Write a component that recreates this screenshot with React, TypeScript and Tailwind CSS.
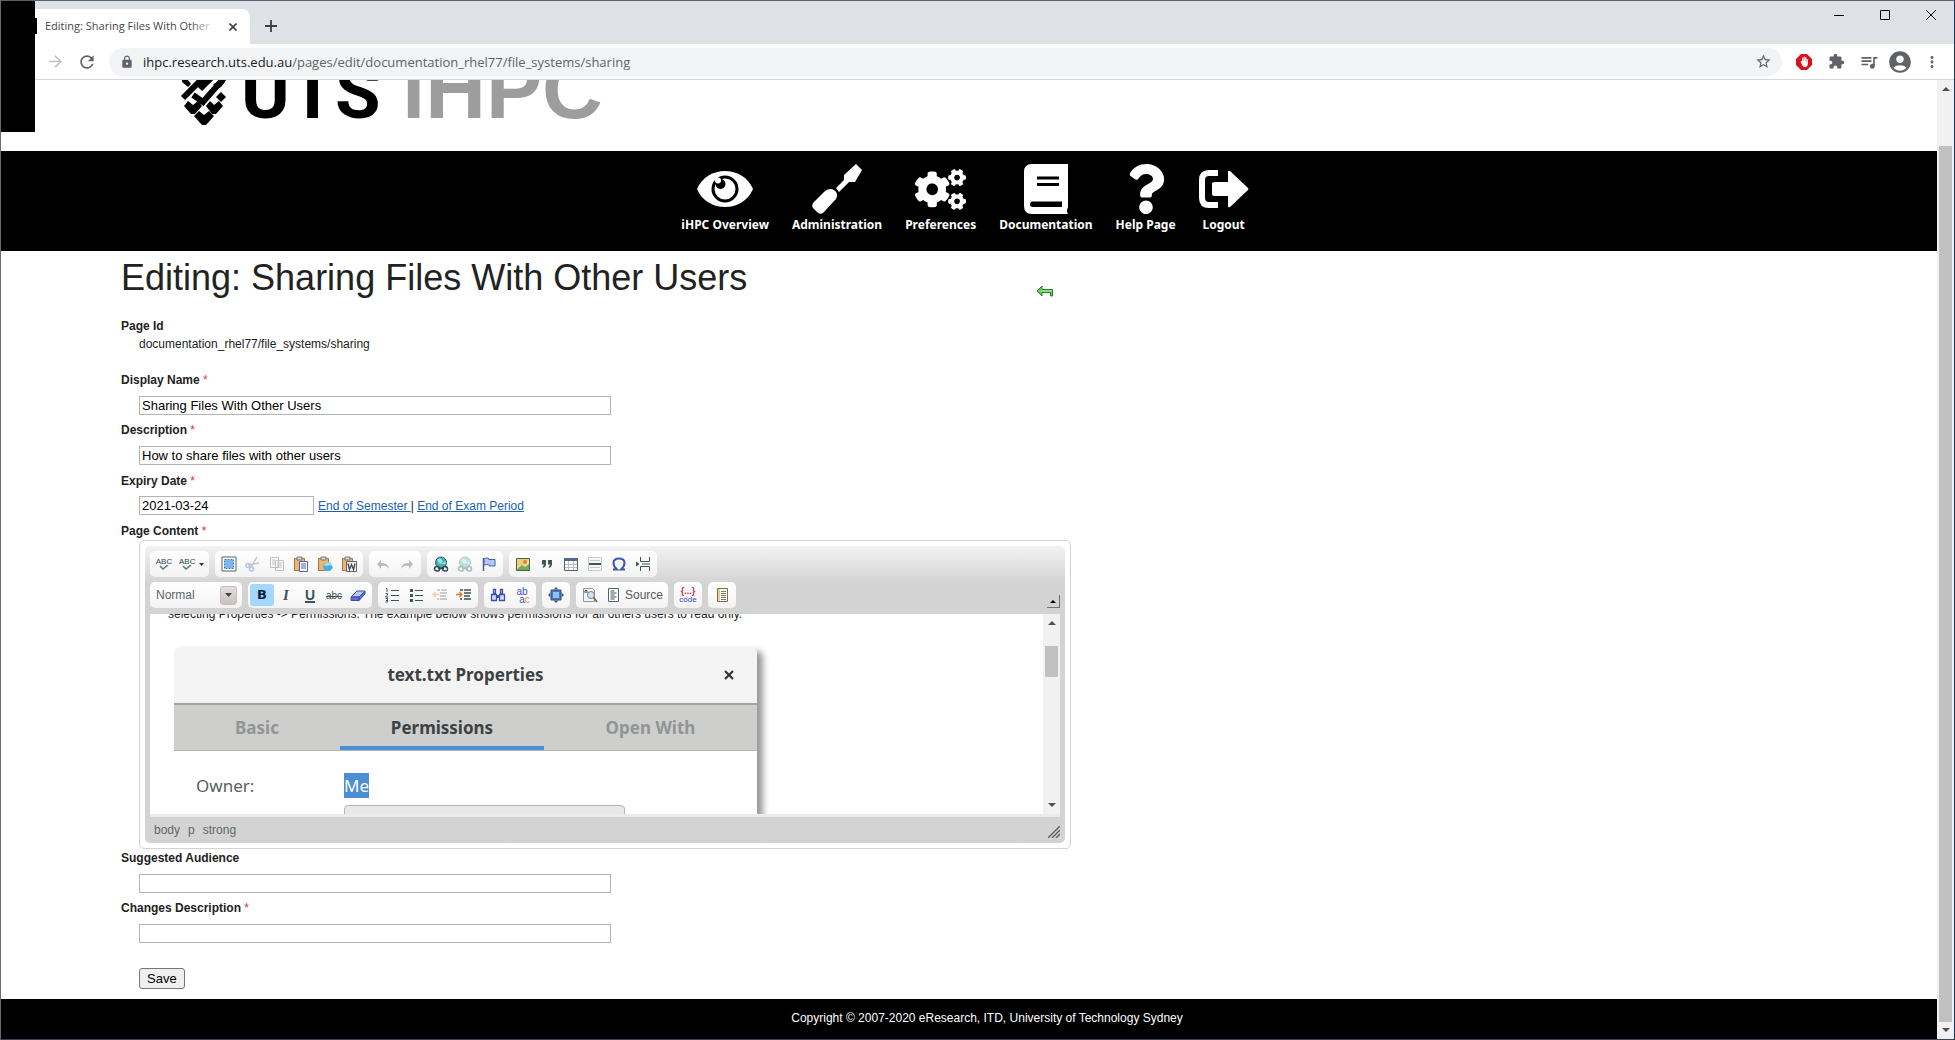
import type { ReactNode } from "react";
import { FaCogs, FaQuestion } from "react-icons/fa";
import {
  MdAccountCircle,
  MdArrowForward,
  MdExtension,
  MdLock,
  MdMoreVert,
  MdQueueMusic,
  MdRefresh,
  MdStarBorder,
} from "react-icons/md";

/* ---------- browser window ---------- */

function WindowBar() {
  return (
    <div className="flex h-[43px] items-start bg-[#dee1e6] pl-[28px]">
      <div className="mt-[8px] flex h-[35px] w-[221px] items-center rounded-t-lg bg-white pr-[9px] pl-[16px]">
        <span className="relative flex-1 overflow-hidden font-['Open_Sans',sans-serif] text-[11px] whitespace-nowrap text-[#45484c]">
          Editing: Sharing Files With Other
          <span className="absolute inset-y-0 right-0 w-[24px] bg-linear-to-r from-transparent to-white" />
        </span>
        <button aria-label="Close tab" className="ml-[10px] flex size-[16px] items-center justify-center">
          <svg viewBox="0 0 8 8" className="size-[8px]" stroke="#3c4043" strokeWidth="1.6">
            <path d="M0.5 0.5l7 7M7.5 0.5l-7 7" />
          </svg>
        </button>
      </div>
      <button aria-label="New tab" className="mt-[15px] ml-[11px] flex size-[20px] items-center justify-center">
        <svg viewBox="0 0 12 12" className="size-[12px]" stroke="#3c4043" strokeWidth="1.8">
          <path d="M6 0v12M0 6h12" />
        </svg>
      </button>
      <div className="ml-auto flex h-[28px]">
        <button aria-label="Minimize" className="flex w-[46px] items-center justify-center">
          <svg viewBox="0 0 10 10" className="size-[10px]" stroke="#000" fill="none"><path d="M0 5.5h10" /></svg>
        </button>
        <button aria-label="Maximize" className="flex w-[46px] items-center justify-center">
          <svg viewBox="0 0 10 10" className="size-[10px]" stroke="#000" fill="none"><path d="M.5.5h9v9h-9z" /></svg>
        </button>
        <button aria-label="Close" className="flex w-[46px] items-center justify-center">
          <svg viewBox="0 0 10 10" className="size-[10px]" stroke="#000" fill="none"><path d="M0 0l10 10M10 0L0 10" /></svg>
        </button>
      </div>
    </div>
  );
}

function AddressBar() {
  return (
    <div className="flex h-[36px] items-center border-b border-[#d5d7da] bg-white pr-[13px] pl-[45px] text-[#5f6368]">
      <button aria-label="Forward" className="w-[20px]"><MdArrowForward size={19} className="text-[#bdbfc2]" /></button>
      <button aria-label="Reload" className="ml-[11px] w-[20px]"><MdRefresh size={20} /></button>
      <div className="ml-[12px] flex h-[28px] flex-1 items-center rounded-full bg-[#f1f3f4] pr-[10px] pl-[11px]">
        <MdLock size={14} />
        <p className="ml-[9px] flex font-['Open_Sans',sans-serif] text-[13px] leading-[18px] whitespace-nowrap">
          <span className="text-[#202124]">ihpc.research.uts.edu.au</span>
          <span>/pages/edit/documentation_rhel77/file_systems/sharing</span>
        </p>
        <button aria-label="Bookmark this page" className="ml-auto"><MdStarBorder size={17} /></button>
      </div>
      <div className="ml-[14px] flex items-center">
        <button aria-label="Ad blocker" className="flex w-[16px] justify-center">
          <svg viewBox="0 0 16 16" className="size-[16px]">
            <path d="M5 0h6l5 5v6l-5 5H5l-5-5V5z" fill="#d9101e" />
            <path d="M4.500 7.500q.8-1 1.500.5V4q.6-.8 1.200 0v3h.4V3q.6-.8 1.200 0v4h.4V3.500q.6-.8 1.200 0V8h.3V5.500q.6-.8 1.200 0V10q-.4 3-2.900 3.200-2 0-3-2.500z" fill="#fff" />
          </svg>
        </button>
        <button aria-label="Extensions" className="ml-[16px]"><MdExtension size={17} /></button>
        <button aria-label="Media" className="ml-[14px]"><MdQueueMusic size={20} /></button>
        <button aria-label="Profile" className="ml-[8px]"><MdAccountCircle size={26} /></button>
        <button aria-label="Menu" className="ml-[10px]"><MdMoreVert size={18} /></button>
      </div>
    </div>
  );
}

function Arrow({ down = false }: { down?: boolean }) {
  return (
    <svg viewBox="0 0 8 4" className="h-[4px] w-[8px]" fill="#505050">
      <path d={down ? "M0 0h8L4 4z" : "M0 4h8L4 0z"} />
    </svg>
  );
}

function PageScrollbar() {
  return (
    <div className="flex w-[17px] shrink-0 flex-col items-center bg-[#f1f1f1] py-[7px]">
      <Arrow />
      <div className="mt-[55px] mb-[6px] w-[13px] flex-1 bg-[#c1c1c1]" />
      <Arrow down />
    </div>
  );
}

/* ---------- site header ---------- */

function Emblem() {
  return (
    <svg viewBox="0 0 46 46" className="mt-[80px] h-[46px] w-[46px]">
      <g stroke="#000" strokeWidth="6" fill="none">
        <path d="M3 18L23-2M13 15l10 7L44-2M20 9L32-3" />
      </g>
      <path d="M2 0h6l3 4-3 3-6-5zM17 0h5l2 3-3 2z" />
      <path d="M33 4l12-4v2l-4 5-4 2z" />
      <path d="M41 12l5 5-5 5-5-5z" />
      <path d="M4 26l4-5 5 4 5-4 4 5-7 8h-4z" />
      <path d="M26 26l4-5 4 4 5-4 4 5-7 8h-4z" />
      <path d="M14 36l5-5 5 4 5-4 5 5-8 9h-4z" />
    </svg>
  );
}

function Logo() {
  return (
    <div className="-mt-[80px] flex h-[151px] items-start overflow-hidden pl-[179px] font-['Liberation_Sans',Arial,sans-serif] font-bold">
      <Emblem />
      <p className="mt-[41px] flex items-baseline whitespace-nowrap">
        <span className="w-[176px] pl-[15px] font-['Roboto',sans-serif] text-[74px] leading-[84px] text-black">UTS</span>
        <span className="text-[84px] leading-[96px] text-[#9d9d9d]">iHPC</span>
      </p>
    </div>
  );
}

const EyeIcon = (
  <svg viewBox="0 0 56 36" className="h-[36px] w-[56px]">
    <path d="M0 18C10-6 46-6 56 18 46 42 10 42 0 18z" fill="#fff" />
    <circle cx="28" cy="18" r="13.500" fill="#000" />
    <circle cx="28" cy="18" r="10.500" fill="#fff" />
    <circle cx="23.500" cy="13" r="5" fill="#000" />
    <circle cx="21" cy="9.500" r="3" fill="#fff" />
  </svg>
);
const ScrewdriverIcon = (
  <svg viewBox="0 0 50 50" className="size-[50px]" fill="#fff">
    <path d="M44 0l6 6-7 12h-6L27 28l-3-4 8-8v-5z" />
    <path d="M12 28q5-5 10-2t2 9L11 49q-3 2-6-1l-4-4q-2-3 1-6z" />
  </svg>
);
const BookIcon = (
  <svg viewBox="0 0 44 50" className="h-[50px] w-[44px]">
    <path d="M8 0h36v43q-2 4 0 7H8q-8 0-8-8V8q0-8 8-8z" fill="#fff" />
    <path d="M13 14h22M13 20.500h22" stroke="#000" strokeWidth="3" />
    <path d="M8 37.500h30v5.500H9q-3 0-3-2.500t2-3z" fill="#000" />
  </svg>
);
const LogoutIcon = (
  <svg viewBox="0 0 50 38" className="h-[38px] w-[50px]">
    <path d="M19 3H10q-7 0-7 7v18q0 7 7 7h9" stroke="#fff" strokeWidth="6" fill="none" />
    <path d="M13 14q0-2 3-2h13V2q0-2 2-1l18 17q1 1 0 2L31 37q-2 1-2-1V26H16q-3 0-3-2z" fill="#fff" />
  </svg>
);

const NAV: { label: string; icon: ReactNode }[] = [
  { label: "iHPC Overview", icon: EyeIcon },
  { label: "Administration", icon: ScrewdriverIcon },
  { label: "Preferences", icon: <FaCogs size={51} /> },
  { label: "Documentation", icon: BookIcon },
  { label: "Help Page", icon: <FaQuestion size={50} /> },
  { label: "Logout", icon: LogoutIcon },
];

function NavBar() {
  return (
    <nav className="flex h-[100px] justify-center gap-[23px] bg-black pt-[13px] pr-[8px] text-white">
      {NAV.map((n) => (
        <a key={n.label} href="#" className="flex flex-col items-center font-['Noto_Sans',Tahoma,sans-serif] text-[12px] leading-[18px] font-bold whitespace-nowrap">
          <span className="flex h-[50px] items-center">{n.icon}</span>
          <span className="mt-[2px]">{n.label}</span>
        </a>
      ))}
    </nav>
  );
}

/* ---------- form ---------- */

function FieldLabel({ htmlFor, required, children }: { htmlFor?: string; required?: boolean; children: ReactNode }) {
  return (
    <label htmlFor={htmlFor} className="block text-[12px] leading-[18px] font-bold">
      {children}
      {required && <span className="font-normal text-[#e03030]"> *</span>}
    </label>
  );
}

const inputClass = "h-[19px] border border-[#b4b4b4] bg-white px-[2px] text-[13px] text-black";

function TextField({ id, label, value = "", required }: { id: string; label: string; value?: string; required?: boolean }) {
  return (
    <div className="mb-[6px]">
      <FieldLabel htmlFor={id} required={required}>{label}</FieldLabel>
      <div className="mt-[7px] flex pl-[18px]">
        <input id={id} type="text" defaultValue={value} className={`${inputClass} w-full max-w-[472px]`} />
      </div>
    </div>
  );
}

/* ---------- editor toolbar ---------- */

function Icon({ children, faded }: { children: ReactNode; faded?: boolean }) {
  return (
    <svg viewBox="0 0 16 16" fill="none" className={faded ? "size-[16px] opacity-35" : "size-[16px]"}>
      {children}
    </svg>
  );
}

function Tool({ label, children, wide, on }: { label: string; children: ReactNode; wide?: boolean; on?: boolean }) {
  return (
    <button
      type="button"
      aria-label={label}
      className={`flex h-[22px] items-center justify-center rounded-[3px] ${wide ? "px-[3px]" : "w-[24px]"} ${on ? "bg-[#a3d7ff]" : ""}`}
    >
      {children}
    </button>
  );
}

function Group({ children }: { children: ReactNode }) {
  return (
    <div className="flex h-[26px] items-center rounded-[5px] bg-linear-to-b from-white to-[#f3f3f3] px-[2px]">{children}</div>
  );
}

const DARK = "#3f5457";

const Spell = (
  <span className="flex flex-col items-center font-['Liberation_Sans',sans-serif] text-[8px] leading-[8px] text-[#2f4447]">
    ABC
    <svg viewBox="0 0 10 6" className="-mt-[1px] h-[6px] w-[10px]" fill="none" stroke="#4a8078" strokeWidth="1.600"><path d="M1 1l3 3 5-4" /></svg>
  </span>
);

const Clipboard = (
  <>
    <path d="M1.500 2.500h10v12h-10z" fill="#e8b676" stroke="#b0733a" />
    <path d="M4 1h5v3H4z" fill="#d8d8d8" stroke="#777" />
  </>
);

const Globe = (
  <>
    <circle cx="8" cy="6.500" r="5.500" fill="#4bb39b" stroke="#2c6170" />
    <path d="M4 4q3-3 5 0t-2 4zM9 8l3-3 1 3z" fill="#9adfff" />
    <path d="M1.500 13q0-2.500 2.500-2.500t2.500 2.500-2.500 2-2.500-2zM9.500 13q0-2.500 2.500-2.500t2.500 2.500-2.500 2-2.500-2zM5 12.500h6" stroke="#2f4a55" strokeWidth="1.500" />
  </>
);

function ToolbarTop() {
  return (
    <div className="flex flex-wrap gap-[6px]">
      <Group>
        <Tool label="Check spelling">{Spell}</Tool>
        <Tool label="Spell check options" wide>
          {Spell}
          <svg viewBox="0 0 5 3" className="ml-[4px] h-[3px] w-[5px]" fill="#333"><path d="M0 0h5L2.500 3z" /></svg>
        </Tool>
      </Group>
      <Group>
        <Tool label="Select all">
          <Icon>
            <path d="M1 1h14v14H1z" fill="#fff" stroke="#56656b" />
            <path d="M4 4h8v8H4z" fill="#7db4ea" />
            <path d="M3.500 3.500h9v9h-9z" stroke="#3a72b4" strokeDasharray="2 1" />
          </Icon>
        </Tool>
        <Tool label="Cut">
          <Icon faded>
            <path d="M12 1L6 11M14 7L3 9" stroke="#667" strokeWidth="1.500" />
            <circle cx="3" cy="9.500" r="2" stroke="#36c" strokeWidth="1.500" />
            <circle cx="6.500" cy="13" r="2" stroke="#36c" strokeWidth="1.500" />
          </Icon>
        </Tool>
        <Tool label="Copy">
          <Icon faded>
            <path d="M1.500 1.500h8v10h-8zM6.500 4.500h8v10h-8z" fill="#fff" stroke="#566" />
            <path d="M3 4h3M3 6h3M3 8h3M8 7h5M8 9h5M8 11h5" stroke="#566" />
          </Icon>
        </Tool>
        <Tool label="Paste">
          <Icon>{Clipboard}<path d="M6.500 5.500h8v10h-8z" fill="#fff" stroke="#4a5fc0" /><path d="M8 8h5M8 10h5M8 12h5" stroke="#4a5fc0" /></Icon>
        </Tool>
        <Tool label="Paste as plain text">
          <Icon>{Clipboard}<path d="M7 8l6-2 3 6-3 3H8l-2-4z" fill="#46b0dc" /><path d="M7 8l6-2 1 3-6 1z" fill="#a6e0f7" /></Icon>
        </Tool>
        <Tool label="Paste from Word">
          <Icon>{Clipboard}<path d="M5.500 5.500h10v10h-10z" fill="#eee" stroke="#666" /><path d="M7 7.500l1.500 6 2-5 2 5 1.500-6" stroke="#445" strokeWidth="1.300" /></Icon>
        </Tool>
      </Group>
      <Group>
        <Tool label="Undo"><Icon faded><path d="M6 4v3q7-1 8 6-3-4-8-3v3L2 8z" fill={DARK} /></Icon></Tool>
        <Tool label="Redo"><Icon faded><path d="M10 4v3q-7-1-8 6 3-4 8-3v3l4-5z" fill={DARK} /></Icon></Tool>
      </Group>
      <Group>
        <Tool label="Link"><Icon>{Globe}</Icon></Tool>
        <Tool label="Unlink"><Icon faded>{Globe}</Icon></Tool>
        <Tool label="Anchor">
          <Icon><path d="M2.500 2v13" stroke="#4a5a9a" strokeWidth="1.500" /><path d="M3 2.500q3-1 5 0v1h6v6.500H8.500V9Q6 8 3 9z" fill="#b4c8f2" stroke="#4a5fae" /></Icon>
        </Tool>
      </Group>
      <Group>
        <Tool label="Image">
          <Icon><path d="M1.500 2.500h13v12h-13z" fill="#f4e08a" stroke="#4f6248" /><path d="M2 3h12L9 8 2 11z" fill="#e9d07c" /><path d="M2 13l5-4 3 2 4-3v6H2z" fill="#6fac62" /><circle cx="10" cy="6" r="2" fill="#de7b4c" /></Icon>
        </Tool>
        <Tool label="Block quote">
          <Icon><path d="M3 4h4v4q0 3-3.500 4l1.500-3.500H3zM9 4h4v4q0 3-3.500 4L11 8.500H9z" fill={DARK} /></Icon>
        </Tool>
        <Tool label="Table">
          <Icon><path d="M1.500 2.500h13v12h-13z" fill="#fff" stroke="#50646c" /><path d="M1 2h14v3H1z" fill="#4d6a98" /><path d="M2 8.500h12M2 11.500h12M5.500 5v9M10.500 5v9" stroke="#b5c0c6" /></Icon>
        </Tool>
        <Tool label="Horizontal line">
          <Icon><path d="M1.500 1.500h13v13h-13z" fill="#f7f7f7" stroke="#c5cbcd" /><path d="M3 4.500h10M3 11.500h10" stroke="#c5cbcd" /><path d="M2 8h12" stroke={DARK} strokeWidth="2" /></Icon>
        </Tool>
        <Tool label="Special character">
          <Icon><path d="M2 13.500h4q-3.500-3-3.500-6.500 0-4.500 5.500-4.500T13.500 7q0 3.500-3.500 6.500h4" stroke="#3e55b4" strokeWidth="2" /></Icon>
        </Tool>
        <Tool label="Page break">
          <Icon><path d="M5.500 1v4.500h9V1M5.500 15v-4.500h9V15M7 8h8" stroke={DARK} /><path d="M1 5.500L4.500 8 1 10.500z" fill={DARK} /></Icon>
        </Tool>
      </Group>
    </div>
  );
}

function ToolbarBottom() {
  return (
    <div className="mt-[5px] flex flex-wrap gap-[6px]">
      <div className="flex h-[26px] w-[92px] items-center rounded-[5px] bg-linear-to-b from-white to-[#f3f3f3] pr-[5px] pl-[6px]">
        <button type="button" className="flex flex-1 items-center justify-between text-[12px] text-[#60676a]">
          Normal
          <span className="flex h-[19px] w-[17px] items-center justify-center rounded-[3px] border border-[#c5bcbc] bg-linear-to-b from-[#e4dede] to-[#c9c0c0]">
            <svg viewBox="0 0 7 4" className="h-[4px] w-[7px]" fill="#444"><path d="M0 0h7L3.500 4z" /></svg>
          </span>
        </button>
      </div>
      <Group>
        <Tool label="Bold" on><span className="font-['DejaVu_Sans',sans-serif] text-[13px] font-black text-[#0b1e33]">B</span></Tool>
        <Tool label="Italic"><span className="font-['Liberation_Serif',serif] text-[15px] font-bold text-[#3f5457] italic">I</span></Tool>
        <Tool label="Underline"><span className="text-[14px] font-bold text-[#3f5457] underline decoration-2">U</span></Tool>
        <Tool label="Strike through"><span className="text-[10px] text-[#3f5457] line-through">abc</span></Tool>
        <Tool label="Remove format">
          <Icon><path d="M1 10l6-6h8l-6 6z" fill="#b9c6f5" stroke="#3c4fb8" /><path d="M1 10h8v3.500H1zM9 10l6-6v3l-6 6.500z" fill="#5a70d8" stroke="#3c4fb8" /></Icon>
        </Tool>
      </Group>
      <Group>
        <Tool label="Numbered list">
          <Icon><path d="M7 3.500h8M7 8.500h8M7 13.500h8" stroke={DARK} /><path d="M2 1.500h1v3.500M1.500 6.500h2v1.500l-2 2h2.500M1.500 11.500h2v3.500h-2M2 13.500h1.500" stroke={DARK} /></Icon>
        </Tool>
        <Tool label="Bulleted list">
          <Icon><path d="M7 3.500h8M7 8.500h8M7 13.500h8" stroke={DARK} /><path d="M2 2h3v3H2zM2 7h3v3H2zM2 12h3v3H2z" fill={DARK} /></Icon>
        </Tool>
        <Tool label="Decrease indent">
          <Icon faded><path d="M5 3h3M9 3h6M8 6h7M8 9h6M8 12h7M5 12h2" stroke={DARK} strokeWidth="1.300" /><path d="M7 7.500H1M3.500 5L1 7.500 3.500 10" stroke="#e0762c" strokeWidth="1.300" /></Icon>
        </Tool>
        <Tool label="Increase indent">
          <Icon><path d="M4 3h3M8 3h7M8 6h7M8 9h6M8 12h7M4 12h2" stroke={DARK} strokeWidth="1.500" /><path d="M0 7.500h6M3.500 5L6 7.500 3.500 10" stroke="#e0762c" strokeWidth="1.300" /></Icon>
        </Tool>
      </Group>
      <Group>
        <Tool label="Find">
          <Icon><path d="M3.500 2.500h2v4h-2zM10.500 2.500h2v4h-2zM1.500 7.500h5v6h-5zM9.500 7.500h5v6h-5z" fill="#d4dcff" stroke="#3a4fae" strokeWidth="1.300" /><path d="M7 8h2v3H7z" fill="#3a4fae" /></Icon>
        </Tool>
        <Tool label="Replace">
          <span className="flex flex-col text-[10px] leading-[7px] text-[#4350b5]"><span className="pb-[1px]">ab</span><span className="pl-[5px]">a<span className="text-[#e0963c]">c</span></span></span>
        </Tool>
      </Group>
      <Group>
        <Tool label="Maximize editor">
          <Icon><path d="M3 3h10v10H3z" fill="#4a78c0" stroke="#2f5576" /><path d="M5 5h6v6H5z" fill="#8fc0f5" /><path d="M8 0l2.500 2.500h-5zM8 16l2.500-2.500h-5zM0 8l2.500-2.500v5zM16 8l-2.500-2.500v5z" fill="#3f5e72" /></Icon>
        </Tool>
      </Group>
      <Group>
        <Tool label="Preview">
          <Icon><path d="M1.500 1.500h9l2 2v11h-11z" fill="#f5f5f5" stroke="#8d9698" /><path d="M3 6V3.500h2V6" stroke="#444" /><circle cx="9" cy="8" r="3.500" fill="#cfe4ee" stroke="#7b8486" /><path d="M11.500 10.500L15 15" stroke="#8a6a52" strokeWidth="2" /></Icon>
        </Tool>
        <Tool label="Source" wide>
          <Icon><path d="M3.500 1.500h10v13h-10z" fill="#fff" stroke="#50646c" /><path d="M5.500 4h4M5.500 6h6M5.500 8h4M5.500 10h6M5.500 12h4" stroke={DARK} /></Icon>
          <span className="pl-[4px] text-[12px] text-[#555c5e]">Source</span>
        </Tool>
      </Group>
      <Group>
        <Tool label="Insert code">
          <span className="flex flex-col items-center text-[9px] leading-[9px] font-bold text-[#cc1f3a]">{"{...}"}<span className="text-[8px] leading-[7px] font-normal text-[#2f45c8]">code</span></span>
        </Tool>
      </Group>
      <Group>
        <Tool label="Templates">
          <Icon><path d="M3.500 1.500h10v13h-10z" fill="#fffdf2" stroke="#76704e" /><path d="M4 2h2v12H4z" fill="#e8cd96" /><path d="M7 4.500h5M7 6.500h5M7 8.500h5M7 10.500h5M7 12.500h5" stroke="#777" /></Icon>
        </Tool>
      </Group>
      <button type="button" aria-label="Collapse toolbar" className="mt-auto ml-auto flex size-[13px] items-center justify-center border-r border-b border-[#707070]">
        <svg viewBox="0 0 6 3" className="h-[3px] w-[6px]"><path d="M0 3h6L3 0z" /></svg>
      </button>
    </div>
  );
}

/* ---------- editor content ---------- */

function PropertiesDialog() {
  return (
    <div className="ml-[24px] w-[583px] max-w-full rounded-t-[6px] bg-white font-['Noto_Sans',sans-serif] text-[#3c4143] shadow-[6px_4px_6px_rgba(0,0,0,0.4)]">
      <div className="relative flex h-[58px] items-center justify-center rounded-t-[6px] border-b-2 border-[#a3a3a2] bg-[#f3f3f3] text-[17px] font-bold">
        text.txt Properties
        <svg viewBox="0 0 10 10" className="absolute right-[23px] size-[10px]" stroke="#2e3436" strokeWidth="2.200"><path d="M1 1l8 8M9 1l-8 8" /></svg>
      </div>
      <div className="flex h-[46px] border-b border-[#b4b4b2] bg-[#cececd] text-[17px] font-bold">
        <div className="flex w-[166px] items-center justify-center text-[#929595]">Basic</div>
        <div className="flex w-[204px] items-center justify-center border-b-4 border-[#4a8ed6] pt-[4px]">Permissions</div>
        <div className="flex flex-1 items-center justify-center text-[#929595]">Open With</div>
      </div>
      <div className="flex pt-[22px] pl-[22px] text-[17px] leading-[25px] text-[#5a6062]">
        <span className="w-[148px]">Owner:</span>
        <span className="bg-[#4a8ed6] text-white">Me</span>
      </div>
      <div className="mt-[7px] ml-[170px] h-[34px] w-[281px] rounded-[4px] border border-[#b4b4b2] bg-[#e8e8e8]" />
    </div>
  );
}

function Editor() {
  return (
    <div className="ml-[18px] max-w-[932px] rounded-[5px] border border-[#d3d3d3] p-[5px]">
      <div className="rounded-[5px] bg-[#d3d3d3] bg-linear-to-b from-[#f2f2f2] to-[#d3d3d3] to-[38px] px-[5px] pt-[5px]">
        <ToolbarTop />
        <ToolbarBottom />
        <div className="mt-[6px] flex h-[203px] border-b-3 border-[#ebebeb] bg-white">
          <div className="h-[200px] flex-1 overflow-hidden">
            <p className="-mt-[7px] mb-[25px] pl-[18px] text-[12px] leading-[15px] whitespace-nowrap text-[#222]">
              selecting Properties -&gt; Permissions. The example below shows permissions for all others users to read only.
            </p>
            <PropertiesDialog />
          </div>
          <div className="flex w-[17px] flex-col items-center bg-[#f1f1f1] py-[7px]">
            <Arrow />
            <div className="mt-[21px] mb-auto h-[31px] w-[13px] bg-[#c1c1c1]" />
            <Arrow down />
          </div>
        </div>
        <div className="flex h-[26px] items-center gap-[8px] pl-[4px] text-[12px] text-[#60676a]">
          <span>body</span>
          <span>p</span>
          <span>strong</span>
          <svg viewBox="0 0 12 12" className="mt-[4px] ml-auto size-[12px]" stroke="#5a5a5a" strokeWidth="1.300"><path d="M0 12L12 0M4 12l8-8M8 12l4-4" /></svg>
        </div>
      </div>
    </div>
  );
}

function EditForm() {
  return (
    <form className="pr-[20px] pb-[9px] pl-[120px]">
      <div className="flex items-center">
        <h1 className="text-[36px] leading-[54px] whitespace-nowrap">Editing: Sharing Files With Other Users</h1>
        <a href="#" aria-label="Back" className="mt-[26px] ml-[289px]">
          <svg viewBox="0 0 18 12" className="h-[12px] w-[18px]">
            <path d="M1 6l5-5v3.500h10.500V11h-2V7.500H6V11z" fill="#5fd05a" stroke="#2f7a2f" />
            <path d="M5 6h11" stroke="#b6f0a8" />
          </svg>
        </a>
      </div>
      <div className="mt-[12px] mb-[18px] text-[12px] leading-[18px]">
        <p className="font-bold">Page Id</p>
        <p className="pl-[18px]">documentation_rhel77/file_systems/sharing</p>
      </div>
      <TextField id="display-name" label="Display Name" value="Sharing Files With Other Users" required />
      <TextField id="description" label="Description" value="How to share files with other users" required />
      <div className="mt-[7px] mb-[6px]">
        <FieldLabel htmlFor="expiry" required>Expiry Date</FieldLabel>
        <div className="mt-[6px] flex items-end pl-[18px] text-[12px]">
          <input id="expiry" type="text" defaultValue="2021-03-24" className={`${inputClass} w-[175px]`} />
          <span className="ml-[4px] leading-[18px] whitespace-pre">
            <a href="#" className="text-[#1a5fb4] underline">End of Semester </a>
            {"| "}
            <a href="#" className="text-[#1a5fb4] underline">End of Exam Period</a>
          </span>
        </div>
      </div>
      <div className="pt-[1px]">
        <FieldLabel required>Page Content</FieldLabel>
      </div>
      <Editor />
      <TextField id="audience" label="Suggested Audience" />
      <TextField id="changes" label="Changes Description" required />
      <button type="button" className="mt-[19px] ml-[18px] h-[21px] rounded-[3px] border border-[#767676] bg-[#efefef] px-[7px] text-[13px] leading-[19px] text-black">
        Save
      </button>
    </form>
  );
}

export default function App() {
  return (
    <div className="relative flex h-screen flex-col overflow-hidden border border-t-[#5f6070] border-r-[#1d2f5c] border-b-[#34465a] border-l-[#6b6b6b] bg-white font-['Liberation_Sans',Arial,sans-serif] text-[#222]">
      <WindowBar />
      <AddressBar />
      <div className="flex min-h-0 flex-1">
        <main className="flex min-w-0 flex-1 flex-col overflow-hidden">
          <Logo />
          <NavBar />
          <EditForm />
          <footer className="flex-1 bg-black pt-[10px] pl-[36px] text-center text-[12px] leading-[18px] text-white">
            Copyright © 2007-2020 eResearch, ITD, University of Technology Sydney
          </footer>
        </main>
        <PageScrollbar />
      </div>
      <div className="absolute -top-px -left-px h-[132px] w-[35px] bg-black" />
      <div className="absolute top-[17px] left-[34px] h-[16px] w-[2px] bg-black" />
    </div>
  );
}
